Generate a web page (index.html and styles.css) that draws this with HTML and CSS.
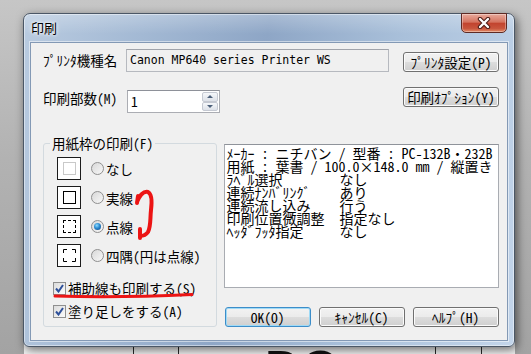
FILE: index.html
```html
<!DOCTYPE html>
<html lang="ja">
<head>
  <meta charset="UTF-8">
  <meta name="viewport" content="width=device-width, initial-scale=1.0">
  <title>印刷</title>
  <link rel="stylesheet" href="styles.css">
</head>
<body>
  <div class="desktop">
    <div class="backdoc">
      <span class="big-text">DO</span>
    </div>

    <div class="dialog">
      <div class="titlebar">
        <span class="title">印刷</span>
        <button class="close-btn" aria-label="閉じる">
          <svg width="14" height="12" viewBox="0 0 14 12">
            <path d="M3 2 L11 10 M11 2 L3 10" stroke="#4a1a14" stroke-width="4.4" stroke-linecap="round"/>
            <path d="M3 2 L11 10 M11 2 L3 10" stroke="#fff" stroke-width="2.4" stroke-linecap="round"/>
          </svg>
        </button>
      </div>

      <div class="client">
        <div class="field-row">
          <span class="field-label">ﾌﾟﾘﾝﾀ機種名</span>
          <div class="textbox">Canon MP640 series Printer WS</div>
          <button class="btn btn-side">ﾌﾟﾘﾝﾀ設定(P)</button>
        </div>

        <div class="field-row copies-row">
          <span class="field-label">印刷部数(M)</span>
          <div class="spin">
            <span class="spin-value">1</span>
            <div class="spin-btns">
              <span class="spin-arrow"><span class="tri-up"></span></span>
              <span class="spin-arrow"><span class="tri-down"></span></span>
            </div>
          </div>
          <button class="btn btn-side btn-options">印刷ｵﾌﾟｼｮﾝ(Y)</button>
        </div>

        <div class="main">
          <fieldset class="group">
            <legend>用紙枠の印刷(F)</legend>
            <div class="group-body">
              <div class="frame-options">
                <div class="frame-option">
                  <span class="frame-icon"><span class="inner inner-none"></span></span>
                  <span class="radio"></span>
                  <span>なし</span>
                </div>
                <div class="frame-option">
                  <span class="frame-icon"><span class="inner"></span></span>
                  <span class="radio"></span>
                  <span>実線</span>
                </div>
                <div class="frame-option">
                  <span class="frame-icon"><span class="inner inner-dashed"></span></span>
                  <span class="radio checked"></span>
                  <span>点線</span>
                </div>
                <div class="frame-option">
                  <span class="frame-icon">
                    <svg width="13" height="13" viewBox="0 0 13 13">
                      <path d="M0.5 4 V0.5 H4 M9 0.5 H12.5 V4 M12.5 9 V12.5 H9 M4 12.5 H0.5 V9" stroke="#000" fill="none"/>
                    </svg>
                  </span>
                  <span class="radio"></span>
                  <span>四隅(円は点線)</span>
                </div>
              </div>

              <div class="checks">
                <label class="check-row">
                  <span class="checkbox"><svg width="9" height="9" viewBox="0 0 9 9"><path d="M1 4.5 L3.5 7.5 L8 1" stroke="#2d4f99" stroke-width="2" fill="none"/></svg></span>
                  <span>補助線も印刷する(S)</span>
                </label>
                <label class="check-row">
                  <span class="checkbox"><svg width="9" height="9" viewBox="0 0 9 9"><path d="M1 4.5 L3.5 7.5 L8 1" stroke="#2d4f99" stroke-width="2" fill="none"/></svg></span>
                  <span>塗り足しをする(A)</span>
                </label>
              </div>
            </div>
          </fieldset>

          <div class="side">
            <div class="info">
              <div class="info-line">ﾒｰｶｰ : ニチバン / 型番 : PC-132B・232B</div>
              <div class="info-line">用紙 : 葉書 / 100.0×148.0 mm / 縦置き</div>
              <div class="info-pair"><span class="info-key">ﾗﾍﾞﾙ選択</span><span>なし</span></div>
              <div class="info-pair"><span class="info-key">連続ﾅﾝﾊﾞﾘﾝｸﾞ</span><span>あり</span></div>
              <div class="info-pair"><span class="info-key">連続流し込み</span><span>行う</span></div>
              <div class="info-pair"><span class="info-key">印刷位置微調整</span><span>指定なし</span></div>
              <div class="info-pair"><span class="info-key">ﾍｯﾀﾞﾌｯﾀ指定</span><span>なし</span></div>
            </div>
            <div class="buttons">
              <button class="btn btn-default">OK(O)</button>
              <button class="btn">ｷｬﾝｾﾙ(C)</button>
              <button class="btn">ﾍﾙﾌﾟ(H)</button>
            </div>
          </div>
        </div>
      </div>
    </div>

    <!-- hand-drawn red marks on top of the screenshot -->
    <svg class="marks" width="531" height="354" viewBox="0 0 531 354">
      <path d="M138 196 L137 203
               M137 202 C140 195, 144 191, 148 192 C152 194, 152 202, 151 210 C150 219, 151 226, 148 232 C146 235, 143 236, 140 236
               M140 229 L140 238"
            stroke="#ec1414" stroke-width="4" fill="none" stroke-linecap="round" stroke-linejoin="round"/>
      <path d="M55 296 C100 297.5, 150 296.5, 192 294.5" stroke="#ec1414" stroke-width="3" fill="none" stroke-linecap="round"/>
    </svg>
  </div>
</body>
</html>
```

FILE: styles.css
```css
body {
  margin: 0;
  font-family: "Noto Sans Mono CJK JP", "Noto Sans CJK JP", sans-serif;
  font-size: 13.5px;
  color: #000;
  background-color: #b5b5b5;
}

.desktop {
  position: relative;
  width: 531px;
  height: 354px;
  overflow: hidden;
  background: linear-gradient(to bottom, #c6c6c6 0%, #b2b2b2 45%, #a3a3a3 100%);
}

/* document behind the dialog */
.backdoc {
  position: absolute;
  left: 24px;
  top: 336px;
  width: 491px;
  height: 18px;
  overflow: hidden;
  background: linear-gradient(90deg,
    transparent 109px, #2a2a2a 109px, #2a2a2a 110px, transparent 110px,
    transparent 154px, #2a2a2a 154px, #2a2a2a 155px, transparent 155px,
    transparent 411px, #2a2a2a 411px, #2a2a2a 412px, transparent 412px,
    transparent 457px, #2a2a2a 457px, #2a2a2a 458px, transparent 458px),
    #f2f2f2;
}

.big-text {
  display: block;
  margin: 8px 0 0 241px;
  font-family: "Liberation Sans", sans-serif;
  font-weight: bold;
  font-size: 50px;
  line-height: 50px;
  color: #111;
}

/* Aero window */
.dialog {
  position: absolute;
  left: 23px;
  top: 13px;
  width: 492px;
  height: 334px;
  box-sizing: border-box;
  display: flex;
  flex-direction: column;
  padding: 0 6px 5px;
  border: 1px solid #4b5766;
  border-radius: 7px 7px 6px 6px;
  background:
    linear-gradient(to bottom, rgba(255, 255, 255, 0.25) 0, rgba(255, 255, 255, 0) 20px),
    linear-gradient(100deg, #b9cbe0 0%, #a3b9d4 22%, #8ea6c6 45%, #a9c0da 70%, #c3d5ea 100%);
  box-shadow: inset 0 0 0 1px rgba(255, 255, 255, 0.45), 2px 3px 10px rgba(0, 0, 0, 0.55);
}

.titlebar {
  height: 28px;
  display: flex;
  align-items: flex-start;
}

.title {
  margin: 7px 0 0 1px;
  font-family: "Noto Sans CJK JP", sans-serif;
  font-size: 13px;
  line-height: 14px;
  text-shadow: 0 0 5px #fff, 0 0 3px #fff;
}

.close-btn {
  margin: -1px 1px 0 auto;
  width: 46px;
  height: 20px;
  padding: 0;
  display: flex;
  align-items: center;
  justify-content: center;
  border: 1px solid #5e2a24;
  border-radius: 0 0 5px 5px;
  background: linear-gradient(to bottom, #e8aa9c 0%, #d5735f 45%, #c2442f 52%, #c8553d 80%, #e38d68 100%);
  box-shadow: inset 0 0 0 1px rgba(255, 255, 255, 0.35);
}

.client {
  flex: 1;
  box-sizing: border-box;
  padding: 6px 8px 0 12px;
  background-color: #f0f0f0;
  border: 1px solid #8399b5;
  box-shadow: 0 0 0 1px rgba(255, 255, 255, 0.5);
}

/* top rows */
.field-row {
  display: flex;
  align-items: flex-start;
}

.copies-row {
  margin-top: 15px;
}

.field-label {
  width: 83px;
  line-height: 23px;
  white-space: nowrap;
}

.textbox {
  width: 263px;
  height: 23px;
  box-sizing: border-box;
  padding: 0 3px;
  font-family: "DejaVu Sans Mono", monospace;
  font-size: 11.5px;
  line-height: 21px;
  white-space: nowrap;
  background-color: #f0f0f0;
  border: 1px solid #b6b9bf;
  border-top-color: #a0a3aa;
}

.spin {
  display: flex;
  width: 93px;
  height: 23px;
  margin: 3px 0 0 1px;
  box-sizing: border-box;
  background-color: #fff;
  border: 1px solid #abadb3;
  border-top-color: #8e9199;
}

.spin-value {
  flex: 1;
  padding-left: 3px;
  line-height: 21px;
}

.spin-btns {
  width: 16px;
  display: flex;
  flex-direction: column;
  padding: 1px 1px 1px 0;
}

.spin-arrow {
  flex: 1;
  display: flex;
  align-items: center;
  justify-content: center;
  border: 1px solid #c5c9d2;
  border-radius: 2px;
  background: linear-gradient(to bottom, #f5f7fa, #dde1e8);
}

.tri-up,
.tri-down {
  width: 0;
  height: 0;
  border-left: 3px solid transparent;
  border-right: 3px solid transparent;
}

.tri-up {
  border-bottom: 3px solid #4c607a;
}

.tri-down {
  border-top: 3px solid #4c607a;
}

/* buttons */
.btn {
  width: 86px;
  height: 20px;
  padding: 0;
  box-sizing: border-box;
  font-family: inherit;
  font-size: 13.5px;
  line-height: 18px;
  color: #000;
  white-space: nowrap;
  border: 1px solid #707070;
  border-radius: 3px;
  background: linear-gradient(to bottom, #f2f2f2 0%, #ebebeb 50%, #dddddd 50%, #cfcfcf 100%);
  box-shadow: inset 0 0 0 1px #fbfbfb;
}

.btn-side {
  width: 96px;
  margin: 3px 0 0 auto;
}

.btn-options {
  margin-top: 0;
}

.btn-default {
  border-color: #3c8dc9;
  box-shadow: inset 0 0 0 1px #9fdaf6;
}

/* lower part */
.main {
  display: flex;
  gap: 7px;
  margin-top: 23px;
}

.group {
  width: 174px;
  margin: 0;
  padding: 7px 0 6px 0;
  box-sizing: border-box;
  border: 1px solid #d3dadf;
  border-radius: 3px;
}

.group legend {
  margin-left: 6px;
  padding: 0 2px;
  line-height: 14px;
}

.group-body {
  padding-left: 13px;
}

.frame-options {
  display: flex;
  flex-direction: column;
  gap: 6px;
}

.frame-option {
  display: flex;
  align-items: center;
  height: 23px;
  white-space: nowrap;
}

.frame-icon {
  width: 24px;
  height: 23px;
  box-sizing: border-box;
  display: flex;
  align-items: center;
  justify-content: center;
  background-color: #fff;
  border: 1px solid #1c1c1c;
}

.inner {
  width: 13px;
  height: 13px;
  box-sizing: border-box;
  border: 1px solid #000;
}

.inner-none {
  border-color: #c9c9c9;
}

.inner-dashed {
  border-style: dashed;
}

.radio {
  position: relative;
  width: 13px;
  height: 13px;
  margin: 0 2px 0 10px;
  box-sizing: border-box;
  border: 1px solid #8f8f8f;
  border-radius: 50%;
  background: linear-gradient(135deg, #d8d8d8, #f8f8f8);
}

.radio.checked::after {
  content: "";
  position: absolute;
  left: 2px;
  top: 2px;
  width: 7px;
  height: 7px;
  border-radius: 50%;
  background: radial-gradient(circle at 40% 35%, #8fdcff 0%, #2a8ad0 45%, #0f3f7c 100%);
}

.checks {
  display: flex;
  flex-direction: column;
  gap: 7px;
  margin: 13px 0 0 -4px;
}

.check-row {
  display: flex;
  align-items: center;
  gap: 2px;
  height: 16px;
  white-space: nowrap;
}

.checkbox {
  width: 13px;
  height: 13px;
  box-sizing: border-box;
  display: flex;
  align-items: center;
  justify-content: center;
  border: 1px solid #8f8f8f;
  background: linear-gradient(135deg, #dcdcdc, #fafafa);
}

.side {
  width: 276px;
  display: flex;
  flex-direction: column;
  padding-top: 8px;
}

.info {
  height: 144px;
  box-sizing: border-box;
  padding: 2px 0 0 2px;
  font-size: 14px;
  line-height: 13px;
  background-color: #fff;
  border: 1px solid #a9acb2;
  border-top-color: #8f939a;
}

.info-line {
  white-space: pre;
}

.info-pair {
  display: flex;
  white-space: nowrap;
}

.info-key {
  width: 113px;
}

.buttons {
  display: flex;
  gap: 8px;
  margin-top: 19px;
  padding-left: 1px;
}

/* red pen marks */
.marks {
  position: absolute;
  left: 0;
  top: 0;
  pointer-events: none;
}
```
